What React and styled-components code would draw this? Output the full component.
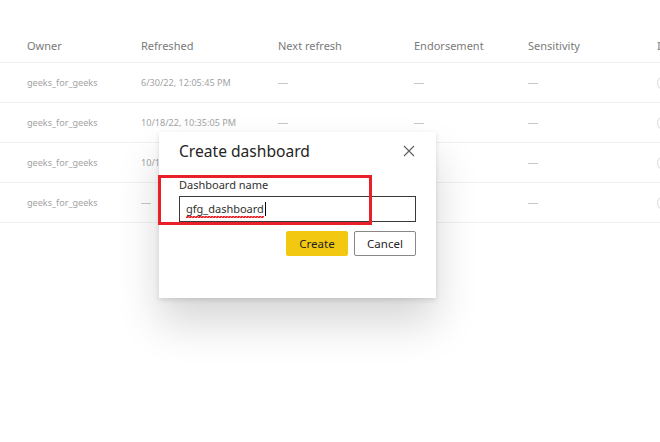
import React from "react";
import styled, { createGlobalStyle } from "styled-components";

const Global = createGlobalStyle`
  html, body { margin: 0; padding: 0; background: #fff; }
  body { font-family: "Noto Sans", "Open Sans", sans-serif; overflow: hidden; }
`;

const Page = styled.div`
  position: relative;
  width: 660px;
  height: 442px;
  overflow: hidden;
  background: #fff;
  padding-top: 28px;
  box-sizing: border-box;
`;

const Table = styled.div`
  display: flex;
  flex-direction: column;
`;

const Row = styled.div`
  display: grid;
  grid-template-columns: 114px 137px 136px 114px 129px 40px;
  align-items: center;
  padding-left: 27px;
  height: ${(p) => (p.$head ? "34px" : "39px")};
  border-bottom: 1px solid #f1f1f1;
  white-space: nowrap;
`;

const HeadCell = styled.div`
  font-size: 11px;
  color: #7a7a7a;
`;

const Cell = styled.div`
  font-size: 9.1px;
  color: #a3a3a3;
`;

const Dash = styled.span`
  display: inline-block;
  width: 10px;
  height: 1px;
  background: #c8c8c8;
  vertical-align: middle;
`;

const Circle = styled.div`
  width: 16px;
  height: 16px;
  border-radius: 50%;
  border: 1px solid #dcdcdc;
  box-sizing: border-box;
`;

const Dialog = styled.div`
  position: absolute;
  left: 159px;
  top: 132px;
  width: 277px;
  height: 166px;
  background: #fff;
  box-shadow: 0 25px 40px rgba(0, 0, 0, 0.16), 0 2px 5px rgba(0, 0, 0, 0.12);
  padding: 6px 20px 0 20px;
  box-sizing: border-box;
  display: flex;
  flex-direction: column;
`;

const TitleBar = styled.div`
  display: flex;
  align-items: center;
  justify-content: space-between;
  height: 26px;
`;

const Title = styled.div`
  font-size: 15.6px;
  color: #252423;
`;

const Close = styled.div`
  width: 12px;
  height: 12px;
  margin-right: 1px;
  display: flex;
`;

const Label = styled.div`
  margin-top: 13px;
  font-size: 11px;
  color: #323130;
  line-height: 15px;
`;

const Input = styled.div`
  margin-top: 4px;
  height: 26px;
  border: 1px solid #3b3a39;
  box-sizing: border-box;
  display: flex;
  align-items: center;
  padding-left: 6px;
  font-size: 11px;
  color: #323130;
`;

const Typed = styled.span`
  padding-bottom: 2px;
  background-image:
    linear-gradient(135deg, transparent 35%, #f0202a 35%, #f0202a 65%, transparent 65%),
    linear-gradient(45deg, transparent 35%, #f0202a 35%, #f0202a 65%, transparent 65%);
  background-size: 3px 2px;
  background-repeat: repeat-x;
  background-position: 0 100%, 1.5px 100%;
`;

const Caret = styled.span`
  display: inline-block;
  width: 1px;
  height: 14px;
  background: #000;
  margin-left: 1px;
`;

const Buttons = styled.div`
  display: flex;
  justify-content: flex-end;
  gap: 6px;
  margin-top: 9px;
`;

const Button = styled.div`
  height: 25px;
  width: 62px;
  box-sizing: border-box;
  display: flex;
  align-items: center;
  justify-content: center;
  font-size: 11.5px;
  color: #252423;
  background: ${(p) => (p.$primary ? "#f2c811" : "#fff")};
  border: 1px solid ${(p) => (p.$primary ? "#f2c811" : "#8a8886")};
  border-radius: 2px;
`;

const Highlight = styled.div`
  position: absolute;
  left: 158px;
  top: 175px;
  width: 214px;
  height: 50px;
  border: 3px solid #e8202a;
  box-sizing: border-box;
  pointer-events: none;
`;

const rows = [
  ["geeks_for_geeks", "6/30/22, 12:05:45 PM"],
  ["geeks_for_geeks", "10/18/22, 10:35:05 PM"],
  ["geeks_for_geeks", "10/18/22, 10:35:05 PM"],
  ["geeks_for_geeks", null],
];

export default function App() {
  return (
    <>
      <Global />
      <Page>
        <Table>
          <Row $head>
            <HeadCell>Owner</HeadCell>
            <HeadCell>Refreshed</HeadCell>
            <HeadCell>Next refresh</HeadCell>
            <HeadCell>Endorsement</HeadCell>
            <HeadCell>Sensitivity</HeadCell>
            <HeadCell>Included in app</HeadCell>
          </Row>
          {rows.map((r, i) => (
            <Row key={i}>
              <Cell>{r[0]}</Cell>
              <Cell>{r[1] ? r[1] : <Dash />}</Cell>
              <Cell><Dash /></Cell>
              <Cell><Dash /></Cell>
              <Cell><Dash /></Cell>
              <Cell><Circle /></Cell>
            </Row>
          ))}
        </Table>
        <Dialog>
          <TitleBar>
            <Title>Create dashboard</Title>
            <Close>
              <svg width="12" height="12" viewBox="0 0 12 12">
                <path d="M1 1L11 11M11 1L1 11" stroke="#605e5c" strokeWidth="1.1" fill="none" />
              </svg>
            </Close>
          </TitleBar>
          <Label>Dashboard name</Label>
          <Input>
            <Typed>gfg_dashboard</Typed>
            <Caret />
          </Input>
          <Buttons>
            <Button $primary>Create</Button>
            <Button>Cancel</Button>
          </Buttons>
        </Dialog>
        <Highlight />
      </Page>
    </>
  );
}
